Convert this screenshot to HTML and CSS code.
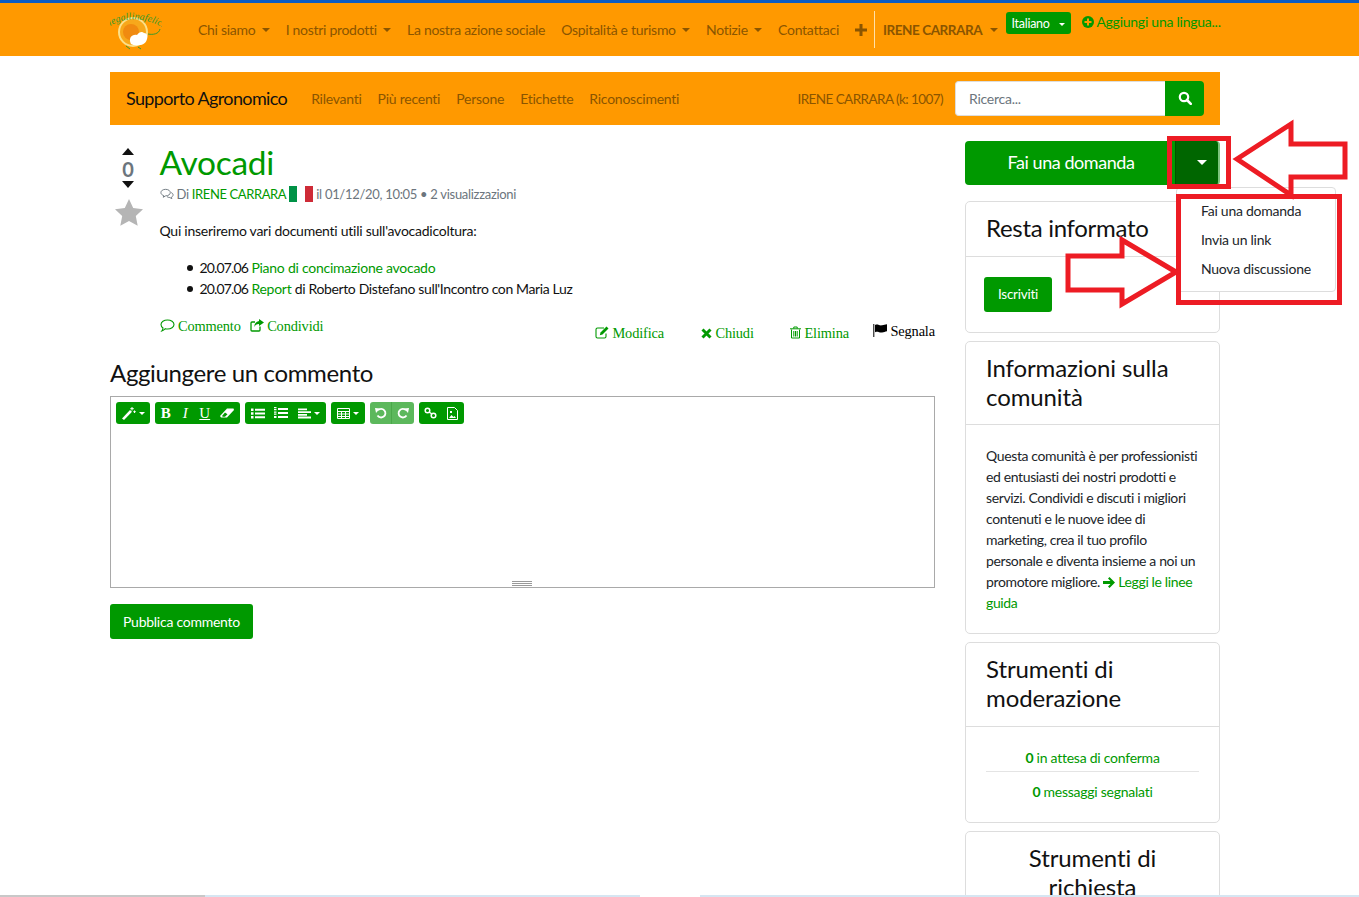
FILE: index.html
```html
<!DOCTYPE html>
<html lang="it">
<head>
    <meta charset="UTF-8">
    <title>Avocadi - Supporto Agronomico</title>
    <link rel="stylesheet" href="styles.css">
</head>
<body>
    <header class="topbar">
        <div class="topbar-inner">
            <a class="logo" href="#">
                <svg width="52" height="38" viewBox="0 0 52 38">
                    <path id="logoArc" d="M0 14Q24 0 52 15" fill="none"/>
                    <circle cx="23" cy="20" r="14" fill="#f7a81b" stroke="#fbe08a" stroke-width="2"/>
                    <circle cx="21" cy="20" r="8" fill="#f08a10"/>
                    <path d="M21 32c-3-6 1-10 6-9 2-3 5-4 7-2 3 0 4 3 3 6-1 4-4 6-8 6-3 1-6 0-8-1z" fill="#fff"/>
                    <path d="M16 34l4 3m8-2l3 2" stroke="#3d9a2b" stroke-width="1" fill="none"/>
                    <path d="M38 22c5 1 11 0 12-5" stroke="#3d9a2b" stroke-width="1" fill="none"/>
                    <text class="logo-text"><textPath href="#logoArc">legallinafelici</textPath></text>
                </svg>
            </a>
            <nav class="mainnav">
                <a href="#">Chi siamo <span class="caret"></span></a>
                <a href="#">I nostri prodotti <span class="caret"></span></a>
                <a href="#">La nostra azione sociale</a>
                <a href="#">Ospitalità e turismo <span class="caret"></span></a>
                <a href="#">Notizie <span class="caret"></span></a>
                <a href="#">Contattaci</a>
                <a href="#" class="plus">
                    <svg width="12" height="12" viewBox="0 0 12 12"><path d="M4.500 0h3v4.500H12v3H7.500V12h-3V7.500H0v-3h4.500z" fill="currentColor"/></svg>
                </a>
                <span class="nav-divider"></span>
                <a href="#" class="user-link">IRENE CARRARA <span class="caret"></span></a>
            </nav>
            <button class="lang-btn">Italiano <span class="caret caret-small"></span></button>
            <a class="add-lang" href="#">
                <svg width="12" height="12" viewBox="0 0 12 12"><circle cx="6" cy="6" r="6" fill="currentColor"/><path d="M5 2.500h2V5h2.500v2H7v2.500H5V7H2.500V5H5z" fill="#ff9900"/></svg>
                Aggiungi una lingua...
            </a>
        </div>
    </header>

    <main class="page">
        <div class="subnav">
            <a class="brand" href="#">Supporto Agronomico</a>
            <a href="#">Rilevanti</a>
            <a href="#">Più recenti</a>
            <a href="#">Persone</a>
            <a href="#">Etichette</a>
            <a href="#">Riconoscimenti</a>
            <span class="subnav-user">IRENE CARRARA (k: 1007)</span>
            <form class="search">
                <input type="text" placeholder="Ricerca...">
                <button type="button" aria-label="Cerca">
                    <svg width="14" height="14" viewBox="0 0 14 14"><circle cx="6" cy="6" r="4.200" fill="none" stroke="#fff" stroke-width="2.200"/><path d="M9 9l3.800 3.800" stroke="#fff" stroke-width="2.600" stroke-linecap="round"/></svg>
                </button>
            </form>
        </div>

        <div class="columns">
            <section class="content">
                <article class="question">
                    <div class="votes">
                        <span class="arrow-up"></span>
                        <span class="vote-count">0</span>
                        <span class="arrow-down"></span>
                        <svg class="star" width="28" height="27" viewBox="0 0 28 27"><path d="M14 0l4.200 9 9.800 1.200-7.200 6.700 1.900 9.800L14 21.900l-8.700 4.800 1.900-9.800L0 10.200 9.800 9z" fill="#b5b5b5"/></svg>
                    </div>
                    <div class="question-main">
                        <h1 class="question-title">Avocadi</h1>
                        <p class="meta">
                            <svg width="14" height="12" viewBox="0 0 15 12"><path d="M6 1c3 0 5 1.500 5 3.500S9 8 6 8L3.500 9.500 4 7.700C2 7 1 6 1 4.500 1 2.500 3 1 6 1z" fill="none" stroke="#6c757d"/><path d="M12 4.500c1.300.5 2 1.400 2 2.500s-.7 1.900-1.700 2.400l.4 1.600-2.200-1.200c-1.200 0-2.300-.4-3-1" fill="none" stroke="#6c757d"/></svg>
                            Di <a href="#" class="meta-user">IRENE CARRARA</a>
                            <span class="flag"><i class="flag-g"></i><i class="flag-w"></i><i class="flag-r"></i></span>
                            il 01/12/20, 10:05 • 2 visualizzazioni
                        </p>
                        <p class="question-text">Qui inseriremo vari documenti utili sull'avocadicoltura:</p>
                        <ul class="docs">
                            <li><span class="doc-date">20.07.06</span> <a href="#">Piano di concimazione avocado</a></li>
                            <li><span class="doc-date">20.07.06</span> <a href="#">Report</a> <span class="doc-note">di Roberto Distefano sull'Incontro con Maria Luz</span></li>
                        </ul>
                        <div class="actions">
                            <div class="actions-left">
                                <a href="#">
                                    <svg width="15" height="13" viewBox="0 0 15 13"><path d="M7.500 1C11 1 14 3 14 5.500S11 10 7.500 10c-.8 0-1.500-.1-2.200-.3C4.300 10.800 3 11.700 1.800 12c.7-.9 1.100-1.800 1.200-3C1.800 8.100 1 6.900 1 5.500 1 3 4 1 7.500 1z" fill="none" stroke="currentColor" stroke-width="1.100"/></svg>
                                    Commento
                                </a>
                                <a href="#">
                                    <svg width="14" height="13" viewBox="0 0 14 13"><path d="M10 7.500V11a1 1 0 0 1-1 1H2a1 1 0 0 1-1-1V4a1 1 0 0 1 1-1h3" fill="none" stroke="currentColor" stroke-width="1.300"/><path d="M9 0l5 3.500L9 7V5C6.500 5 5 6 4.500 8c-.3-3.500 1.500-5.500 4.500-6z" fill="currentColor"/></svg>
                                    Condividi
                                </a>
                            </div>
                            <div class="actions-right">
                                <a href="#" class="act-edit">
                                    <svg width="14" height="13" viewBox="0 0 14 13"><path d="M11 7.500V10.500a1.500 1.500 0 0 1-1.500 1.500h-7A1.500 1.500 0 0 1 1 10.500v-7A1.500 1.500 0 0 1 2.500 2H9" fill="none" stroke="currentColor" stroke-width="1.100"/><path d="M11.500 0.500l2 2-6 6-2.700.7.700-2.700z" fill="currentColor"/></svg>
                                    Modifica
                                </a>
                                <a href="#" class="act-close">
                                    <svg width="11" height="11" viewBox="0 0 11 11"><path d="M1.500 1.500l8 8m0-8l-8 8" stroke="currentColor" stroke-width="3"/></svg>
                                    Chiudi
                                </a>
                                <a href="#" class="act-delete">
                                    <svg width="11" height="13" viewBox="0 0 11 13"><path d="M1.500 3.500V12h8V3.500M0 2.800h11M3.800 2.500V1h3.400v1.500M3.800 5v5.500M5.500 5v5.500M7.200 5v5.500" fill="none" stroke="currentColor"/></svg>
                                    Elimina
                                </a>
                                <a href="#" class="act-flag">
                                    <svg width="14" height="13" viewBox="0 0 14 13"><path d="M.8 0v13" stroke="#000"/><path d="M2 1c3-1.200 4 .8 7 .3 2-.3 3-.8 5-1v7c-2 .4-3 1-5 1.200-3 .3-4-1.500-7-.3z"/></svg>
                                    Segnala
                                </a>
                            </div>
                        </div>
                    </div>
                </article>

                <h2 class="comment-head">Aggiungere un commento</h2>
                <div class="editor">
                    <div class="toolbar">
                        <div class="tool-group">
                            <span class="tool tool-wide">
                                <svg width="14" height="13" viewBox="0 0 14 13"><path d="M0 11.500L8 3l2 1.800L2 13z" fill="#fff"/><path d="M10 0v3.500M8.300 1.700h3.500M12.500 3.500v2.500M11.300 4.700h2.500" stroke="#fff"/></svg>
                                <span class="caret caret-small"></span>
                            </span>
                        </div>
                        <div class="tool-group">
                            <span class="tool tool-letter tool-b">B</span>
                            <span class="tool tool-letter tool-i">I</span>
                            <span class="tool tool-letter tool-u">U</span>
                            <span class="tool tool-eraser">
                                <svg width="14" height="10" viewBox="0 0 14 10"><path d="M4 9.500H1L0 8l7-7.500h6.500L14 2 7 9.500z" fill="#fff"/><path d="M2 8l3-3.500 2.500 1.800L5 8.800H2.800z" fill="#009900"/></svg>
                            </span>
                        </div>
                        <div class="tool-group tool-group-list">
                            <span class="tool">
                                <svg width="14" height="11" viewBox="0 0 14 11"><path d="M0 .5h2.500V3H0zm4 .2h10v2H4zM0 4.200h2.500v2.500H0zm4 .2h10v2H4zM0 8h2.500v2.500H0zm4 .2h10v2H4z" fill="#fff"/></svg>
                            </span>
                            <span class="tool">
                                <svg width="14" height="12" viewBox="0 0 14 12"><path d="M0 0h2.500v1.200H0zm0 2h2.500v1.200H0zm0 2.500h2.500v1.200H0zm0 2h2.500v1.200H0zm0 2.500h2.500v2H0zM4 1h10v2H4zm0 4h10v2H4zm0 4h10v2H4z" fill="#fff"/></svg>
                            </span>
                            <span class="tool tool-wide">
                                <svg width="13" height="11" viewBox="0 0 13 11"><path d="M0 .5h9v1.800H0zm0 2.700h13V5H0zm0 2.700h9v1.800H0zm0 2.700h13v1.800H0z" fill="#fff"/></svg>
                                <span class="caret caret-small"></span>
                            </span>
                        </div>
                        <div class="tool-group">
                            <span class="tool tool-wide">
                                <svg width="13" height="11" viewBox="0 0 13 11"><path d="M.5.500h12v10H.500zM.5 3.500h12M.5 6h12M.5 8.500h12M4.500 3.500v7M8.500 3.500v7" fill="none" stroke="#fff"/></svg>
                                <span class="caret caret-small"></span>
                            </span>
                        </div>
                        <div class="tool-group tool-group-off">
                            <span class="tool tool-split">
                                <svg width="12" height="12" viewBox="0 0 12 12"><path d="M3 3.200A4.300 4.300 0 1 1 2.500 8.500" fill="none" stroke="#fff" stroke-width="1.800"/><path d="M0 1l5 .5L1 6z" fill="#fff"/></svg>
                            </span>
                            <span class="tool">
                                <svg width="12" height="12" viewBox="0 0 12 12"><path d="M9 3.200A4.300 4.300 0 1 0 9.500 8.500" fill="none" stroke="#fff" stroke-width="1.800"/><path d="M12 1l-5 .5L11 6z" fill="#fff"/></svg>
                            </span>
                        </div>
                        <div class="tool-group tool-group-link">
                            <span class="tool">
                                <svg width="13" height="12" viewBox="0 0 13 12"><circle cx="3.500" cy="3.500" r="2.300" fill="none" stroke="#fff" stroke-width="1.500"/><circle cx="9.500" cy="8.500" r="2.300" fill="none" stroke="#fff" stroke-width="1.500"/><path d="M5 5l3 2" stroke="#fff" stroke-width="1.500"/></svg>
                            </span>
                            <span class="tool">
                                <svg width="11" height="13" viewBox="0 0 11 13"><path d="M.5.500h7l3 3v9H.500z" fill="none" stroke="#fff"/><path d="M2 11l2.500-3 2 2 1-1 1.500 2zM3 4h2v2H3z" fill="#fff"/></svg>
                            </span>
                        </div>
                    </div>
                    <div class="editor-body"></div>
                    <span class="editor-grip"></span>
                </div>
                <button class="btn btn-post">Pubblica commento</button>
            </section>

            <aside class="sidebar">
                <div class="ask">
                    <button class="ask-main">Fai una domanda</button>
                    <button class="ask-toggle" aria-label="Apri menu"><span class="caret"></span></button>
                    <div class="ask-menu">
                        <a href="#">Fai una domanda</a>
                        <a href="#">Invia un link</a>
                        <a href="#">Nuova discussione</a>
                    </div>
                </div>

                <div class="card">
                    <h3 class="card-head card-head-tight">Resta informato</h3>
                    <div class="card-body">
                        <button class="btn btn-sub">Iscriviti</button>
                    </div>
                </div>

                <div class="card">
                    <h3 class="card-head">Informazioni sulla comunità</h3>
                    <div class="card-body card-text">
                        Questa comunità è per professionisti ed entusiasti dei nostri prodotti e servizi. Condividi e discuti i migliori contenuti e le nuove idee di marketing, crea il tuo profilo personale e diventa insieme a noi un promotore migliore.
                        <a href="#">
                            <svg width="12" height="11" viewBox="0 0 12 11"><path d="M6.500 0L12 5.500 6.500 11 5 9.500 7.500 7H0V4h7.500L5 1.500z" fill="currentColor"/></svg>
                            Leggi le linee guida
                        </a>
                    </div>
                </div>

                <div class="card">
                    <h3 class="card-head">Strumenti di moderazione</h3>
                    <div class="card-body mod-list">
                        <a href="#"><b>0</b> in attesa di conferma</a>
                        <a href="#"><b>0</b> messaggi segnalati</a>
                    </div>
                </div>

                <div class="card">
                    <h3 class="card-head card-head-center">Strumenti di richiesta</h3>
                </div>
            </aside>
        </div>
    </main>

    <div class="bottom-strip">
        <span class="strip-gray"></span>
        <span class="strip-blue strip-a"></span>
        <span class="strip-gap"></span>
        <span class="strip-blue strip-b"></span>
    </div>

    <svg class="marks" width="1359" height="897" viewBox="0 0 1359 897">
        <rect x="1169.500" y="138.500" width="59" height="48"/>
        <rect x="1178.500" y="196.500" width="161" height="106"/>
        <path d="M1237 159L1291 124V144H1345V177H1291V195z"/>
        <path d="M1176 272L1122 240V256H1068V290H1122V304z"/>
    </svg>
</body>
</html>
```

FILE: styles.css
```css
* {
    box-sizing: border-box;
}

html, body {
    height: 100%;
    overflow: hidden;
}

body {
    margin: 0;
    font-family: 'Lato', sans-serif;
    font-size: 14px;
    line-height: 21px;
    letter-spacing: -0.25px;
    color: #212529;
    background: #fff;
}

button, input {
    letter-spacing: inherit;
}

a {
    color: #009900;
    text-decoration: none;
}

svg {
    vertical-align: -1px;
}

.caret {
    display: inline-block;
    margin-left: 4px;
    vertical-align: 3px;
    border-top: 4px solid;
    border-left: 4px solid transparent;
    border-right: 4px solid transparent;
}

.caret-small {
    margin-left: 3px;
    vertical-align: 2px;
    border-top-width: 3px;
    border-left-width: 3px;
    border-right-width: 3px;
}

/* top bar */
.topbar {
    height: 56px;
    background: #ff9900;
    border-top: 3px solid #0a5cc4;
}

.topbar-inner {
    width: 1110px;
    height: 53px;
    margin-left: 110px;
    display: flex;
    align-items: flex-start;
}

.logo {
    flex: none;
    width: 80px;
    height: 53px;
    padding-top: 9px;
}

.logo-text {
    font-family: 'Liberation Serif', serif;
    font-style: italic;
    font-size: 10px;
    letter-spacing: 0;
    fill: #3d9a2b;
}

.mainnav {
    flex: none;
    display: flex;
    align-items: center;
    height: 39px;
    margin-top: 7px;
    letter-spacing: -0.29px;
}

.mainnav a {
    padding: 0 8px;
    color: #8a5500;
    white-space: nowrap;
}

.mainnav .caret {
    margin-left: 3px;
}

.mainnav .plus {
    padding: 0 6px 0 8px;
}

.nav-divider {
    width: 1px;
    height: 37px;
    margin-left: 1px;
    background: #ffe0a8;
}

.mainnav .user-link {
    padding-top: 1px;
    font-size: 13.500px;
    font-weight: 700;
    letter-spacing: -0.45px;
}

.mainnav .user-link .caret {
    margin-left: 5px;
}

.lang-btn {
    flex: none;
    height: 22px;
    width: 65px;
    margin-top: 9px;
    padding: 0;
    border: 0;
    border-radius: 3px;
    background: #009900;
    color: #fff;
    font-family: inherit;
    font-size: 12.500px;
    white-space: nowrap;
}

.lang-btn .caret {
    margin-left: 6px;
}

.add-lang {
    flex: none;
    margin: 8px 0 0 11px;
    white-space: nowrap;
}

/* second bar */
.page {
    width: 1110px;
    margin: 16px 0 0 110px;
}

.subnav {
    height: 53px;
    padding: 0 16px;
    background: #ff9900;
    display: flex;
    align-items: center;
    gap: 16px;
}

.subnav a {
    color: #8a5500;
}

.subnav .brand {
    margin-right: 8px;
    font-size: 18px;
    letter-spacing: -0.63px;
    color: #111;
}

.subnav-user {
    margin-left: auto;
    padding-top: 1px;
    font-size: 13.500px;
    letter-spacing: -0.57px;
    color: #8a5500;
}

.search {
    display: flex;
    margin-left: -4px;
}

.search input {
    width: 210px;
    height: 35px;
    padding: 0 13px;
    border: 1px solid #ddd;
    border-right: 0;
    border-radius: 4px 0 0 4px;
    font-family: inherit;
    font-size: 14px;
}

.search input::placeholder {
    color: #6c757d;
}

.search button {
    width: 39px;
    height: 35px;
    border: 0;
    border-radius: 0 4px 4px 0;
    background: #009900;
}

/* columns */
.columns {
    display: flex;
    gap: 30px;
    margin-top: 16px;
}

.content {
    width: 825px;
}

.sidebar {
    width: 255px;
}

/* question */
.question {
    display: flex;
}

.votes {
    width: 49.500px;
    padding-top: 7px;
    display: flex;
    flex-direction: column;
    align-items: flex-start;
}

.arrow-up, .arrow-down {
    width: 0;
    margin-left: 12px;
    border-left: 6px solid transparent;
    border-right: 6px solid transparent;
}

.arrow-up {
    border-bottom: 7px solid #111;
}

.arrow-down {
    border-top: 7px solid #111;
}

.vote-count {
    width: 36px;
    margin-top: 2px;
    text-align: center;
    font-size: 20px;
    font-weight: 700;
    line-height: 24px;
    color: #6c757d;
}

.star {
    margin: 11px 0 0 5px;
}

.question-main {
    flex: 1;
}

.question-title {
    margin: 0;
    font-size: 33.500px;
    font-weight: 400;
    line-height: 43px;
    letter-spacing: -0.3px;
    color: #009900;
}

.meta {
    margin: 0;
    color: #6c757d;
    font-size: 13px;
    letter-spacing: -0.3px;
}

.meta-user {
    letter-spacing: -0.4px;
}

.flag {
    display: inline-flex;
    vertical-align: -3px;
    height: 16px;
}

.flag i {
    display: block;
    width: 8px;
}

.flag-g {
    background: #009246;
}

.flag-w {
    background: #fff;
}

.flag-r {
    background: #ce2b37;
}

.question-text {
    margin: 15px 0 0;
    color: #111;
}

.docs {
    margin: 16px 0 0;
    padding-left: 40px;
    list-style: none;
    color: #111;
}

.docs li::before {
    content: "";
    display: inline-block;
    width: 6px;
    height: 6px;
    margin: 0 7px 2px -13px;
    border-radius: 50%;
    background: #111;
}

.doc-date {
    letter-spacing: -0.85px;
}

.doc-note {
    letter-spacing: -0.37px;
}

.actions {
    display: flex;
    justify-content: space-between;
    margin-top: 17px;
    font-family: 'Liberation Serif', serif;
    font-size: 14.400px;
    letter-spacing: -0.15px;
}

.actions-left {
    display: flex;
    gap: 9px;
}

.actions-right {
    display: flex;
    width: 340px;
    margin-top: 7px;
}

.act-edit {
    width: 106px;
}

.act-close {
    width: 89px;
}

.act-delete {
    width: 83px;
}

.act-flag {
    color: #000;
    margin-top: -2px;
    white-space: nowrap;
}

/* editor */
.comment-head {
    margin: 14px 0 9px;
    font-size: 24px;
    font-weight: 400;
    line-height: 29px;
    letter-spacing: -0.36px;
    color: #111;
}

.editor {
    position: relative;
    height: 192px;
    border: 1px solid #a9a9a9;
}

.toolbar {
    display: flex;
    gap: 5px;
    padding: 5px;
}

.tool-group {
    display: flex;
    height: 22px;
    padding: 0 1px;
    border-radius: 3px;
    background: #009900;
    color: #fff;
}

.tool-group-off {
    background: #5cb85c;
}

.tool {
    display: flex;
    align-items: center;
    justify-content: center;
    width: 21px;
}

.tool-wide {
    width: 32px;
}

.tool-group-list .tool {
    width: 23px;
}

.tool-group-list .tool-wide {
    width: 33px;
}

.tool-group-link .tool {
    width: 21.500px;
}

.tool-split {
    border-right: 1px solid #4aa84a;
}

.tool-letter {
    width: 19.500px;
    font-family: 'Liberation Serif', serif;
    font-size: 15px;
    letter-spacing: 0;
}

.tool-eraser {
    width: 24.500px;
}

.tool-b {
    font-weight: 700;
}

.tool-i {
    font-style: italic;
}

.tool-u {
    text-decoration: underline;
}

.editor-grip {
    position: absolute;
    left: 401px;
    bottom: 1px;
    width: 20px;
    height: 5px;
    border-top: 1px solid #999;
    border-bottom: 1px solid #999;
    background: linear-gradient(#999, #999) center / 100% 1px no-repeat;
}

.btn {
    display: block;
    border: 0;
    border-radius: 3px;
    background: #009900;
    color: #fff;
    font-family: inherit;
    font-size: 14px;
}

.btn-post {
    width: 143px;
    height: 35px;
    margin-top: 16px;
}

/* sidebar */
.ask {
    position: relative;
    display: flex;
    height: 44px;
    margin-bottom: 16px;
}

.ask-main {
    width: 210px;
    border: 0;
    border-radius: 4px 0 0 4px;
    background: #009900;
    color: #fff;
    font-family: inherit;
    font-size: 18px;
    letter-spacing: -0.45px;
    padding: 0 0 2px 2px;
}

.ask-toggle {
    width: 45px;
    padding: 0 0 0 10px;
    border: 0;
    border-right: 2px solid #7dc47d;
    border-left: 1px solid #005000;
    border-radius: 0 4px 4px 0;
    background: #006600;
    color: #fff;
}

.ask-toggle .caret {
    margin-left: 0;
    border-top-width: 5px;
    border-left-width: 5px;
    border-right-width: 5px;
}

.ask-menu {
    position: absolute;
    z-index: 5;
    left: 211px;
    top: 46px;
    width: 160px;
    height: 105px;
    padding: 8px 0;
    background: #fff;
    border: 1px solid #ddd;
    border-radius: 4px;
}

.ask-menu a {
    display: block;
    padding: 4px 24px;
    color: #212529;
    font-size: 14px;
    white-space: nowrap;
}

.card {
    border: 1px solid #ddd;
    border-radius: 5px;
    margin-bottom: 8px;
}

.card-head {
    margin: 0;
    padding: 12px 20px 13px;
    border-bottom: 1px solid #ddd;
    font-size: 24px;
    font-weight: 400;
    line-height: 28.800px;
    letter-spacing: -0.1px;
    color: #111;
}

.card-head-tight {
    letter-spacing: -0.3px;
}

.card-head-center {
    padding: 12px 50px;
    text-align: center;
    border-bottom: 0;
}

.card-body {
    padding: 20px;
}

.btn-sub {
    width: 68px;
    height: 35px;
    margin-left: -2px;
    font-size: 13.500px;
}

.card-text {
    padding: 20px 18px 20px 20px;
    letter-spacing: -0.37px;
    color: #212529;
}

.mod-list {
    padding: 20px 20px 18px;
    text-align: center;
}

.mod-list a {
    display: block;
    padding-bottom: 3px;
}

.mod-list a + a {
    padding: 9px 0 2px;
    border-top: 1px solid #e4e4e4;
}

/* page edge */
.bottom-strip {
    position: fixed;
    left: 0;
    right: 0;
    bottom: 0;
    z-index: 8;
    height: 2px;
    display: flex;
}

.strip-gray {
    width: 205px;
    background: #c8c8c8;
}

.strip-a {
    width: 435px;
}

.strip-gap {
    width: 60px;
    background: #fff;
}

.strip-b {
    flex: 1;
}

.strip-blue {
    background: #d6e6f2;
}

/* red marks drawn on the screenshot */
.marks {
    position: fixed;
    left: 0;
    top: 0;
    z-index: 10;
    pointer-events: none;
}

.marks rect, .marks path {
    fill: none;
    stroke: #ed1c24;
    stroke-width: 5;
}
```
